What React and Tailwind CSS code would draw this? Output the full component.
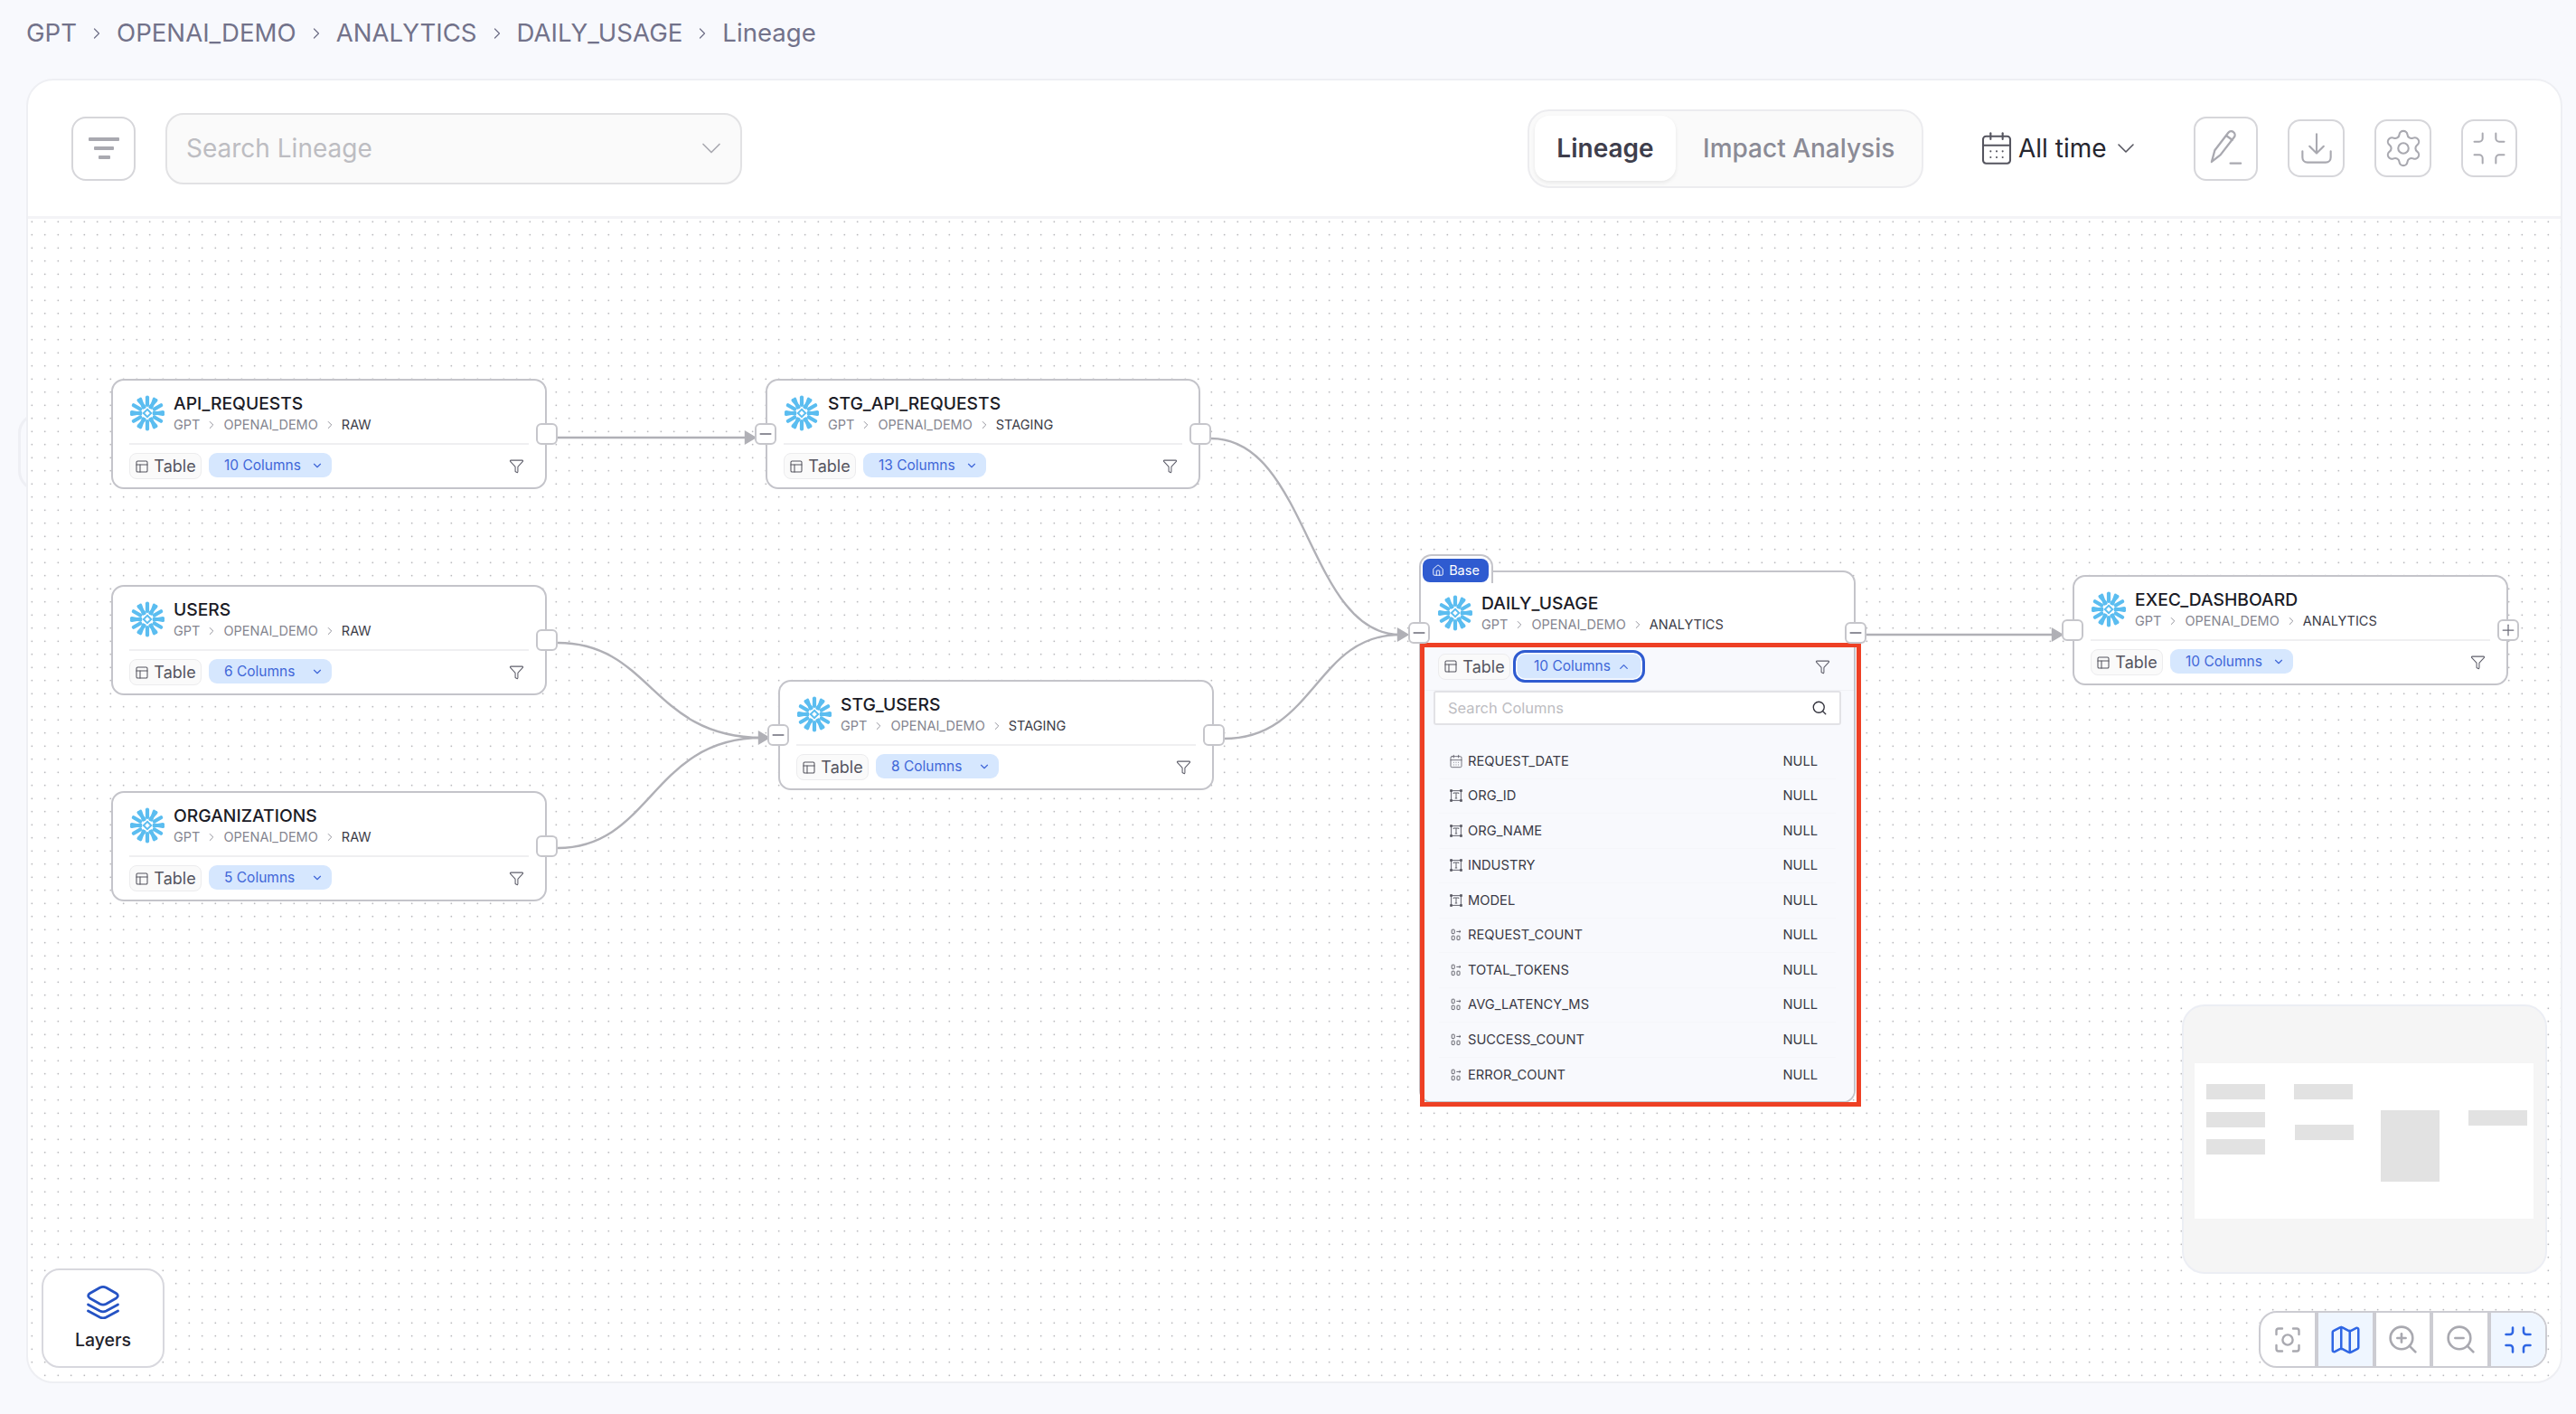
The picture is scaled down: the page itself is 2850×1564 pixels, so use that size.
import { ChevronDown, ChevronRight, ChevronUp, Filter, House, Map as MapIcon, Minimize, Minus, PanelsTopLeft, Plus, Search, Settings, ZoomIn, ZoomOut, CalendarDays } from "lucide-react"

const nodes = [
    { name: "API_REQUESTS", schema: "RAW", cols: "10 Columns", pos: "left-[92px] top-[177px]", w: "w-[482px]", left: false },
    { name: "USERS", schema: "RAW", cols: "6 Columns", pos: "left-[92px] top-[405px]", w: "w-[482px]", left: false },
    { name: "ORGANIZATIONS", schema: "RAW", cols: "5 Columns", pos: "left-[92px] top-[633px]", w: "w-[482px]", left: false },
    { name: "STG_API_REQUESTS", schema: "STAGING", cols: "13 Columns", pos: "left-[816px] top-[177px]", w: "w-[481px]", left: "minus" },
    { name: "STG_USERS", schema: "STAGING", cols: "8 Columns", pos: "left-[830px] top-[510px]", w: "w-[482px]", left: "minus" },
    { name: "EXEC_DASHBOARD", schema: "ANALYTICS", cols: "10 Columns", pos: "left-[2262px] top-[394px]", w: "w-[482px]", left: "empty", right: "plus" },
]

const columns = [
    ["REQUEST_DATE", "date"],
    ["ORG_ID", "text"],
    ["ORG_NAME", "text"],
    ["INDUSTRY", "text"],
    ["MODEL", "text"],
    ["REQUEST_COUNT", "num"],
    ["TOTAL_TOKENS", "num"],
    ["AVG_LATENCY_MS", "num"],
    ["SUCCESS_COUNT", "num"],
    ["ERROR_COUNT", "num"],
]

function SnowflakeLogo({ className }) {
    return (
        <svg viewBox="0 0 40 40" className={className} fill="none" stroke="#5bbdf0" strokeWidth="4.2" strokeLinecap="round">
            {[0, 60, 120, 180, 240, 300].map((a) => (
                <g key={a} transform={`rotate(${a} 20 20)`}>
                    <path d="M20 2.5V11" />
                    <path d="M12.4 4.5L15.6 13.8" strokeWidth="3.8" />
                    <path d="M27.6 4.5L24.4 13.8" strokeWidth="3.8" />
                </g>
            ))}
            <path d="M20 15.8L24.2 20L20 24.2L15.8 20Z" strokeWidth="2" strokeLinecap="butt" />
        </svg>
    )
}

function TextTypeIcon() {
    return (
        <svg viewBox="0 0 14 14" className="w-[14px] h-[14px] shrink-0" fill="none" stroke="#55555f" strokeWidth="0.9">
            <path d="M1.6 2.6V11.4M12.4 2.6V11.4M2.6 1.6H11.4M2.6 12.4H11.4" />
            <rect x="0.7" y="0.7" width="1.7" height="1.7" fill="#55555f" />
            <rect x="11.6" y="0.7" width="1.7" height="1.7" fill="#55555f" />
            <rect x="0.7" y="11.6" width="1.7" height="1.7" fill="#55555f" />
            <rect x="11.6" y="11.6" width="1.7" height="1.7" fill="#55555f" />
            <path d="M4.2 5V4H9.8V5M7 4V10M5.8 10H8.2" />
        </svg>
    )
}

function NumberTypeIcon() {
    return (
        <svg viewBox="0 0 14 14" className="w-[14px] h-[14px] shrink-0" fill="none" stroke="#55555f" strokeWidth="0.9">
            <rect x="2.2" y="1.2" width="3" height="4.4" rx="0.6" />
            <path d="M7.4 3.4H12M10.6 2.2L12 3.4L10.6 4.6" />
            <rect x="2.2" y="8.2" width="3" height="4.4" rx="0.6" />
            <rect x="8" y="8.2" width="3" height="4.4" rx="0.6" />
        </svg>
    )
}

function Handle({ side, kind, top }) {
    return (
        <div className={`absolute z-10 w-[24px] h-[24px] bg-white border-2 border-[#c6c6cb] rounded-[6px] flex items-center justify-center ${side === "left" ? "left-[-14px]" : "right-[-14px]"} ${top}`}>
            {kind === "minus" && <Minus size={20} strokeWidth={1.8} className="text-[#6b6b78]" />}
            {kind === "plus" && <Plus size={20} strokeWidth={1.5} className="text-[#6b6b78]" />}
        </div>
    )
}

function NodeHeader({ name, schema }) {
    return (
        <div className="flex items-center gap-[9px]">
            <SnowflakeLogo className="w-[40px] h-[40px] shrink-0" />
            <div className="flex flex-col">
                <span className="text-[19.3px] leading-[25px] font-medium text-[#1b1b26]">{name}</span>
                <div className="flex items-center gap-[6px] text-[14.5px] leading-[21px] text-[#85858f]">
                    <span>GPT</span>
                    <ChevronRight size={14} strokeWidth={1.5} />
                    <span>OPENAI_DEMO</span>
                    <ChevronRight size={14} strokeWidth={1.5} />
                    <span className="text-[#3c3c47]">{schema}</span>
                </div>
            </div>
        </div>
    )
}

function TableBadge() {
    return (
        <div className="h-[29px] w-[80px] flex items-center justify-center gap-[5px] bg-[#fafafa] border border-[#ececee] rounded-[8px] text-[18px] text-[#55555f]">
            <PanelsTopLeft size={16} strokeWidth={1.6} />
            <span>Table</span>
        </div>
    )
}

function LineageNode({ name, schema, cols, pos, w, left, right }) {
    return (
        <div className={`absolute ${pos} ${w} h-[122px] bg-white border-2 border-[#c4c4ca] rounded-[14px] px-[18px] pt-[13px]`}>
            <NodeHeader name={name} schema={schema} />
            <div className="h-[2px] bg-[#efeff1] mt-[10px]"></div>
            <div className="flex items-center mt-[9px]">
                <TableBadge />
                <div className="ml-[8px] h-[27px] w-[136px] -mt-[2px] flex items-center justify-between pl-[17px] pr-[9px] bg-[#d6e7fe] rounded-[9px] text-[15.5px] text-[#3f66d8]">
                    <span>{cols}</span>
                    <ChevronDown size={14} strokeWidth={2} />
                </div>
                <Filter size={17} strokeWidth={1.5} className="ml-auto mr-[5px] text-[#5f5f6b]" />
            </div>
            {left && <Handle side="left" kind={left} top="top-[47px]" />}
            <Handle side="right" kind={right} top="top-[47px]" />
        </div>
    )
}

function DailyUsageNode() {
    return (
        <div className="absolute left-[1539px] top-[389px] w-[483px] h-[589px] bg-white border-2 border-[#c4c4ca] rounded-[14px] flex flex-col">
            <div className="absolute left-[-2px] top-[-20px] w-[82px] h-[32px] bg-white border-2 border-b-0 border-[#c4c4ca] rounded-t-[14px]">
                <div className="absolute left-[2px] top-[3px] w-[73px] h-[26px] bg-[#2f5bd0] rounded-[8px] flex items-center justify-center gap-[5px] text-[14.5px] text-white">
                    <House size={14} strokeWidth={1.6} />
                    <span>Base</span>
                </div>
            </div>
            <div className="h-[78px] px-[18px] pt-[22px] shrink-0">
                <NodeHeader name="DAILY_USAGE" schema="ANALYTICS" />
            </div>
            <div className="flex-1 bg-[#f8f9fd] rounded-b-[12px] flex flex-col">
                <div className="h-[53px] shrink-0 flex items-center pl-[19px] pr-[26px] border-b border-[#f1f2f6]">
                    <TableBadge />
                    <div className="ml-[3px] h-[36px] w-[146px] flex items-center justify-between pl-[20px] pr-[13px] bg-[#d6e7fe] border-[3px] border-[#2f5bd0] shadow-[inset_0_0_0_1.5px_#ffffff] rounded-[13px] text-[15.5px] text-[#3f66d8]">
                        <span>10 Columns</span>
                        <ChevronUp size={15} strokeWidth={2} />
                    </div>
                    <Filter size={17} strokeWidth={1.5} className="ml-auto text-[#5f5f6b]" />
                </div>
                <div className="mx-[14px] h-[38px] shrink-0 flex items-center justify-between pl-[14px] pr-[13px] bg-white border-2 border-[#e2e2e6] rounded-[3px] text-[16.5px] text-[#bdbdc2]">
                    <span>Search Columns</span>
                    <Search size={18} strokeWidth={1.8} className="text-[#33333d]" />
                </div>
                <div className="mt-[21px] mx-[20px] flex flex-col">
                    {columns.map(([col, type]) => (
                        <div key={col} className="h-[38.5px] flex items-center pl-[12px] pr-[20px] border-b border-[#f5f6fa] last:border-b-0 text-[14.7px] text-[#3a3a46]">
                            {type === "date" && <CalendarDays size={16} strokeWidth={1.2} className="shrink-0 -ml-[1px] -mr-[1px] text-[#55555f]" />}
                            {type === "text" && <TextTypeIcon />}
                            {type === "num" && <NumberTypeIcon />}
                            <span className="ml-[6px]">{col}</span>
                            <span className="ml-auto">NULL</span>
                        </div>
                    ))}
                </div>
            </div>
            <Handle side="left" kind="minus" top="top-[55px]" />
            <Handle side="right" kind="minus" top="top-[55px]" />
        </div>
    )
}

function Arrow({ x, y }) {
    return <polygon points={`${x},${y} ${x - 10},${y - 6} ${x - 10},${y + 6}`} fill="#b0b0b6" />
}

function Edges() {
    return (
        <svg className="absolute inset-0 w-full h-full" fill="none" stroke="#b0b0b6" strokeWidth="2.4">
            <path d="M586 242H796" />
            <Arrow x={804} y={242} />
            <path d="M1309 243C1416 243 1416 460 1518 460" />
            <path d="M1323 575C1424 575 1424 460 1518 460" />
            <Arrow x={1526} y={460} />
            <path d="M586 469C690 469 690 574 812 574" />
            <path d="M586 696C690 696 690 574 812 574" />
            <Arrow x={819} y={574} />
            <path d="M2033 460H2242" />
            <Arrow x={2250} y={460} />
        </svg>
    )
}

function MiniMap() {
    return (
        <div className="absolute right-[15px] bottom-[119px] w-[404px] h-[298px] bg-[#f5f5f5] border-2 border-[#eceef4] rounded-[25px]">
            <div className="absolute left-[12px] top-[63px] w-[375px] h-[172px] bg-white">
                <div className="absolute left-[13px] top-[23px] w-[65px] h-[17px] bg-[#e2e2e2]"></div>
                <div className="absolute left-[13px] top-[54px] w-[65px] h-[17px] bg-[#e2e2e2]"></div>
                <div className="absolute left-[13px] top-[84px] w-[65px] h-[17px] bg-[#e2e2e2]"></div>
                <div className="absolute left-[110px] top-[23px] w-[65px] h-[17px] bg-[#e2e2e2]"></div>
                <div className="absolute left-[111px] top-[68px] w-[65px] h-[17px] bg-[#e2e2e2]"></div>
                <div className="absolute left-[206px] top-[52px] w-[65px] h-[79px] bg-[#e2e2e2]"></div>
                <div className="absolute left-[303px] top-[52px] w-[65px] h-[17px] bg-[#e2e2e2]"></div>
            </div>
        </div>
    )
}

function ZoomControls() {
    return (
        <div className="absolute right-[15px] bottom-[15px] w-[319px] h-[63px] flex bg-white border-2 border-[#ccccd2] rounded-[20px] overflow-hidden">
            <div className="flex-1 flex items-center justify-center text-[#a9a9b0]">
                <svg viewBox="0 0 28 28" className="w-[28px] h-[28px]" fill="none" stroke="currentColor" strokeWidth="2.4" strokeLinecap="round">
                    <path d="M1.5 8V4C1.5 2.6 2.6 1.5 4 1.5H8M20 1.5H24C25.4 1.5 26.5 2.6 26.5 4V8M26.5 20V24C26.5 25.4 25.4 26.5 24 26.5H20M8 26.5H4C2.6 26.5 1.5 25.4 1.5 24V20" />
                    <circle cx="14" cy="14" r="5.6" />
                </svg>
            </div>
            <div className="flex-1 flex items-center justify-center bg-[#eff6ff] border-l-4 border-[#ccccd2] text-[#2f66e4]"><MapIcon size={38} strokeWidth={1.6} /></div>
            <div className="flex-1 flex items-center justify-center border-l-4 border-[#ccccd2] text-[#a9a9b0]"><ZoomIn size={37} strokeWidth={1.7} /></div>
            <div className="flex-1 flex items-center justify-center border-l-4 border-[#ccccd2] text-[#a9a9b0]"><ZoomOut size={37} strokeWidth={1.7} /></div>
            <div className="flex-1 flex items-center justify-center bg-[#eff6ff] border-l-4 border-[#ccccd2] text-[#2f66e4]"><Minimize size={36} strokeWidth={1.7} /></div>
        </div>
    )
}

function LayersButton() {
    return (
        <div className="absolute left-[15px] bottom-[15px] w-[136px] h-[110px] bg-white border-2 border-[#d8d8de] rounded-[20px] flex flex-col items-center pt-[16px]">
            <svg viewBox="0 0 38 38" className="w-[38px] h-[38px]" fill="none" stroke="#2553c4" strokeWidth="2.8" strokeLinejoin="round" strokeLinecap="round">
                <path d="M15.5 3.2C17.6 2.2 20.4 2.2 22.5 3.2L33.5 9.5C36 11 36 13.5 33.5 15L22.5 21.2C20.4 22.3 17.6 22.3 15.5 21.2L4.5 15C2 13.5 2 11 4.5 9.5Z" />
                <path d="M2.5 22L15.5 29C17.6 30 20.4 30 22.5 29L35.5 22" />
                <path d="M2.5 29L15.5 36C17.6 37 20.4 37 22.5 36L35.5 29" />
            </svg>
            <span className="mt-[9px] text-[19.5px] leading-[28px] font-medium text-[#1f1f2b]">Layers</span>
        </div>
    )
}

function IconButton({ size, children }) {
    return (
        <div className={`${size} flex items-center justify-center bg-white border-2 border-[#d6d6da] rounded-[14px] text-[#a9a9b0]`}>
            {children}
        </div>
    )
}

function Toolbar() {
    return (
        <div className="h-[153px] shrink-0 flex items-center pl-[48px] pr-[48px] border-b-[3px] border-[#f3f3f6]">
            <div className="w-[71px] h-[71px] flex items-center justify-center border-2 border-[#d6d6da] rounded-[16px]">
                <svg viewBox="0 0 34 24" className="w-[34px] h-[24px]" fill="#a9a9b0">
                    <rect x="0" y="0" width="34" height="4" rx="1" />
                    <rect x="6" y="10" width="22" height="4" rx="1" />
                    <rect x="11" y="20" width="13" height="4" rx="1" />
                </svg>
            </div>
            <div className="ml-[33px] w-[638px] h-[79px] flex items-center justify-between pl-[21px] pr-[14px] bg-[#fafafa] border-2 border-[#e2e2e4] rounded-[20px] text-[28px] text-[#bdbdc2]">
                <span>Search Lineage</span>
                <ChevronDown size={36} strokeWidth={1.1} className="text-[#a9a9b0]" />
            </div>
            <div className="ml-auto w-[438px] h-[87px] flex items-center pl-[6px] bg-[#fafafa] border-2 border-[#ececef] rounded-[24px] text-[28px] font-medium">
                <div className="w-[156px] h-[72px] flex items-center justify-center bg-white rounded-[16px] shadow-[0_2px_4px_rgba(0,0,0,0.08)] font-semibold text-[#3e3e4c]">Lineage</div>
                <span className="ml-[30px] text-[#8b8b96]">Impact Analysis</span>
            </div>
            <div className="ml-[61px] w-[178px] flex items-center whitespace-nowrap text-[28px] text-[#26262f]">
                <CalendarDays size={40} strokeWidth={1.25} className="shrink-0 text-[#55555f]" />
                <span className="ml-[4px]">All time</span>
                <ChevronDown size={32} strokeWidth={1.2} className="shrink-0 ml-[5px] text-[#55555f]" />
            </div>
            <div className="ml-[60px] flex items-center gap-[33px]">
                <IconButton size="w-[71px] h-[71px]">
                    <svg viewBox="0 0 40 40" className="w-[46px] h-[46px]" fill="none" stroke="currentColor" strokeWidth="2" strokeLinejoin="round" strokeLinecap="round">
                        <path d="M6 33L9 22L22 5C23.4 3.4 25.6 3.2 27 4.4C28.6 5.6 28.8 7.8 27.6 9.4L14.4 26.4L6 33Z" />
                        <path d="M20 7.8L25.8 12" />
                        <path d="M24 34.5H34" />
                    </svg>
                </IconButton>
                <IconButton size="w-[63px] h-[64px]">
                    <svg viewBox="0 0 34 34" className="w-[38px] h-[38px]" fill="none" stroke="currentColor" strokeWidth="1.9" strokeLinejoin="round" strokeLinecap="round">
                        <path d="M17 3V21M10 15L17 22L24 15" />
                        <path d="M3 20V26C3 29 5 31 8 31H26C29 31 31 29 31 26V20" />
                    </svg>
                </IconButton>
                <IconButton size="w-[63px] h-[64px]"><Settings size={46} strokeWidth={1.1} /></IconButton>
                <IconButton size="w-[62px] h-[64px]"><Minimize size={44} strokeWidth={1.1} /></IconButton>
            </div>
        </div>
    )
}

export default function App() {
    return (
        <div className="h-screen overflow-hidden bg-[#f8f9fd] font-['Inter',sans-serif]">
            {/* Breadcrumb */}
            <div className="h-[74px] pl-[29px] mb-[13px] flex items-center gap-[12px] text-[27.6px] text-[#72728a]">
                <span>GPT</span>
                <ChevronRight size={20} strokeWidth={1.5} />
                <span>OPENAI_DEMO</span>
                <ChevronRight size={20} strokeWidth={1.5} />
                <span>ANALYTICS</span>
                <ChevronRight size={20} strokeWidth={1.5} />
                <span>DAILY_USAGE</span>
                <ChevronRight size={20} strokeWidth={1.5} />
                <span>Lineage</span>
            </div>

            <div className="relative ml-[29px] w-[2806px] h-[1443px]">
                {/* Collapsed side tab */}
                <div className="absolute left-[-9px] top-[370px] w-[24px] h-[86px] border-[3px] border-[#eeeff4] rounded-l-[22px]"></div>

                <div className="relative w-full h-full flex flex-col bg-white border-2 border-[#eeeff3] rounded-[30px] overflow-hidden">
                    <Toolbar />

                    {/* Canvas */}
                    <div className="relative flex-1 bg-[radial-gradient(circle,#8e8e94_0.8px,transparent_1px)] bg-[size:14.5px_14.5px] bg-[position:-3px_-4px]">
                        <Edges />
                        {nodes.map((n) => (
                            <LineageNode key={n.name} {...n} />
                        ))}
                        <DailyUsageNode />
                        {/* Highlight box */}
                        <div className="absolute left-[1540px] top-[469px] w-[488px] h-[513px] border-[5px] border-[#ee4024] pointer-events-none"></div>
                        <MiniMap />
                        <ZoomControls />
                        <LayersButton />
                    </div>
                </div>
            </div>
        </div>
    )
}
